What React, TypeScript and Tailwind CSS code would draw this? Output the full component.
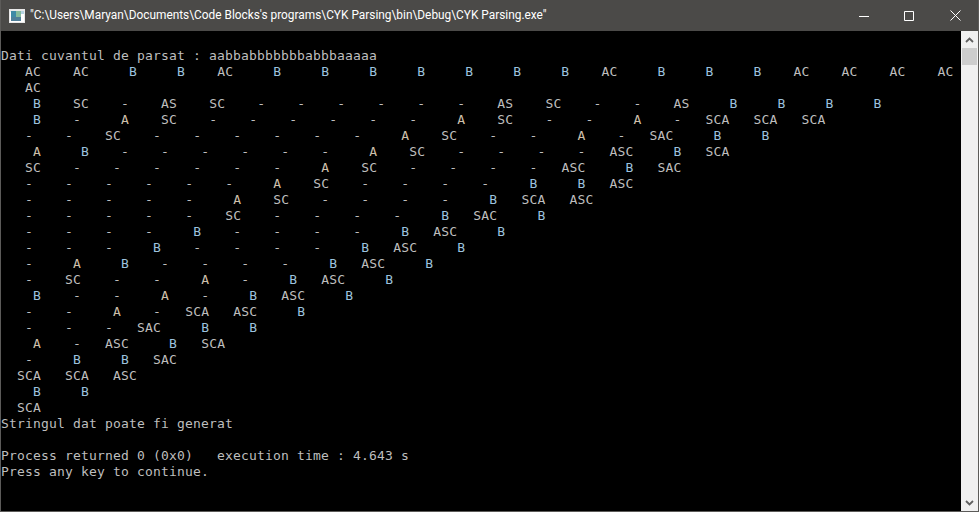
const LINES = [
  '',
  '0:Dati_cuvantul_de_parsat_:_aabbabbbbbbbabbbaaaaa',
  '3:AC 9:AC 16:B 22:B 27:AC 34:B 40:B 46:B 52:B 58:B 64:B 70:B 75:AC 82:B 88:B 94:B 99:AC 105:AC 111:AC 117:AC',
  '3:AC',
  '4:B 9:SC 15:- 20:AS 26:SC 32:- 37:- 42:- 47:- 52:- 57:- 62:AS 68:SC 74:- 79:- 84:AS 91:B 97:B 103:B 109:B',
  '4:B 9:- 15:A 20:SC 26:- 31:- 36:- 41:- 46:- 51:- 57:A 62:SC 68:- 73:- 79:A 84:- 88:SCA 94:SCA 100:SCA',
  '3:- 8:- 13:SC 19:- 24:- 29:- 34:- 39:- 44:- 50:A 55:SC 61:- 66:- 72:A 77:- 81:SAC 89:B 95:B',
  '4:A 10:B 15:- 20:- 25:- 30:- 35:- 40:- 46:A 51:SC 57:- 62:- 67:- 72:- 76:ASC 84:B 88:SCA',
  '3:SC 9:- 14:- 19:- 24:- 29:- 34:- 40:A 45:SC 51:- 56:- 61:- 66:- 70:ASC 78:B 82:SAC',
  '3:- 8:- 13:- 18:- 23:- 28:- 34:A 39:SC 45:- 50:- 55:- 60:- 66:B 72:B 76:ASC',
  '3:- 8:- 13:- 18:- 23:- 29:A 34:SC 40:- 45:- 50:- 55:- 61:B 65:SCA 71:ASC',
  '3:- 8:- 13:- 18:- 23:- 28:SC 34:- 39:- 44:- 49:- 55:B 59:SAC 67:B',
  '3:- 8:- 13:- 18:- 24:B 29:- 34:- 39:- 44:- 50:B 54:ASC 62:B',
  '3:- 8:- 13:- 19:B 24:- 29:- 34:- 39:- 45:B 49:ASC 57:B',
  '3:- 9:A 15:B 20:- 25:- 30:- 35:- 41:B 45:ASC 53:B',
  '3:- 8:SC 14:- 19:- 25:A 30:- 36:B 40:ASC 48:B',
  '4:B 9:- 14:- 20:A 25:- 31:B 35:ASC 43:B',
  '3:- 8:- 14:A 19:- 23:SCA 29:ASC 37:B',
  '3:- 8:- 13:- 17:SAC 25:B 31:B',
  '4:A 9:- 13:ASC 21:B 25:SCA',
  '3:- 9:B 15:B 19:SAC',
  '2:SCA 8:SCA 14:ASC',
  '4:B 10:B',
  '2:SCA',
  '0:Stringul_dat_poate_fi_generat',
  '',
  '0:Process_returned_0_(0x0)___execution_time_:_4.643_s',
  '0:Press_any_key_to_continue.',
]

function Cell({ text }: { text: string }) {
  if (text === 'B') return <span className="text-[#9cc2de]">B</span>
  if (text === 'A') return <span className="text-[#cfc0ac]">A</span>
  return <>{text}</>
}

function ConsoleLine({ spec }: { spec: string }) {
  let at = 0
  const parts = spec ? spec.split(' ') : []
  return (
    <div className="h-4 whitespace-pre leading-4">
      {parts.map((part, i) => {
        const sep = part.indexOf(':')
        const col = Number(part.slice(0, sep))
        const text = part.slice(sep + 1).replaceAll('_', ' ')
        const pad = ' '.repeat(col - at)
        at = col + text.length
        return (
          <span key={i}>
            {pad}
            <Cell text={text} />
          </span>
        )
      })}
    </div>
  )
}

function AppIcon() {
  return (
    <svg width="16" height="16" viewBox="0 0 16 16" className="shrink-0">
      <rect x="0" y="1" width="16" height="14" fill="#e8e8e8" />
      <rect x="1" y="4" width="14" height="10" fill="#ffffff" />
      <rect x="2" y="3" width="5" height="10" fill="#3f8aa6" />
      <rect x="7" y="3" width="5" height="10" fill="#86bb9c" />
      <rect x="2" y="9" width="10" height="4" fill="#4f7f99" />
      <rect x="12" y="3" width="3" height="3" fill="#b4d2e2" />
    </svg>
  )
}

function WindowButtons() {
  return (
    <div className="flex h-full text-white">
      <div className="flex h-full w-[45px] items-center justify-center">
        <svg width="10" height="10" viewBox="0 0 10 10">
          <path d="M0 5.5H10" stroke="currentColor" />
        </svg>
      </div>
      <div className="flex h-full w-[46px] items-center justify-center">
        <svg width="10" height="10" viewBox="0 0 10 10">
          <path d="M.5.5H9.5V9.5H.5Z" fill="none" stroke="currentColor" />
        </svg>
      </div>
      <div className="flex h-full w-[46px] items-center justify-center">
        <svg width="11" height="11" viewBox="0 0 11 11">
          <path d="M.5.5L10.5 10.5M10.5.5L.5 10.5" fill="none" stroke="currentColor" />
        </svg>
      </div>
    </div>
  )
}

function Scrollbar() {
  return (
    <div className="flex w-[17px] shrink-0 flex-col items-center bg-[#f0f0f0] text-[#606060]">
      <div className="flex h-[17px] w-full items-center justify-center">
        <svg width="9" height="6" viewBox="0 0 9 6">
          <path d="M1 5L4.5 1.5L8 5" fill="none" stroke="currentColor" strokeWidth="1.8" />
        </svg>
      </div>
      <div className="h-[17px] w-[15px] bg-[#cdcdcd]" />
      <div className="flex-1" />
      <div className="flex h-[17px] w-full items-center justify-center">
        <svg width="9" height="6" viewBox="0 0 9 6">
          <path d="M1 1L4.5 4.5L8 1" fill="none" stroke="currentColor" strokeWidth="1.8" />
        </svg>
      </div>
    </div>
  )
}

export default function App() {
  return (
    <div className="flex h-[512px] w-[979px] flex-col overflow-hidden border-x border-b border-[#5c5b59] bg-black">
      <div className="flex h-[31px] shrink-0 items-center bg-[#4b4a48]">
        <div className="ml-2">
          <AppIcon />
        </div>
        <div className="ml-[5px] flex-1 truncate font-['Roboto',sans-serif] text-[11.86px] text-white">
          "C:\Users\Maryan\Documents\Code Blocks's programs\CYK Parsing\bin\Debug\CYK Parsing.exe"
        </div>
        <WindowButtons />
      </div>
      <div className="flex min-h-0 flex-1">
        <div className="min-w-0 flex-1 overflow-hidden pt-px font-['DejaVu_Sans_Mono',monospace] text-[13px] tracking-[0.174px] text-[#bebebe]">
          {LINES.map((spec, i) => (
            <ConsoleLine key={i} spec={spec} />
          ))}
        </div>
        <Scrollbar />
      </div>
    </div>
  )
}
